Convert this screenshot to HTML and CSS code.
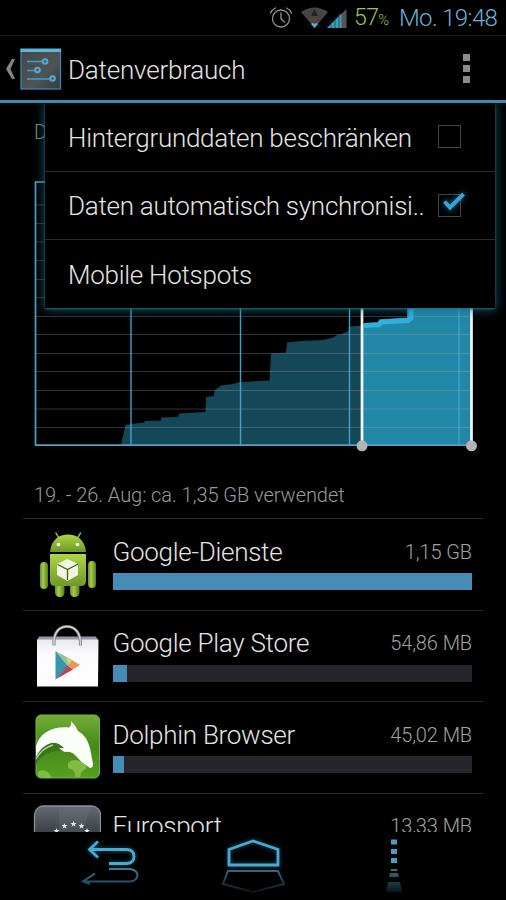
FILE: index.html
```html
<!DOCTYPE html>
<html lang="de">
<head>
<meta charset="utf-8">
<title>Datenverbrauch</title>
<link rel="stylesheet" href="styles.css">
</head>
<body>
<div class="phone">
  <header class="status">
    <svg class="status-icons" width="80" height="28" viewBox="268 4 80 28">
      <g fill="none" stroke="#929292" stroke-width="1.3">
        <circle cx="281" cy="18.500" r="8.500"/>
        <path d="M281 13v6l3.500 3M270.500 13q1.500-3.500 5-5M286.500 8q3.500 1.500 5 5" stroke-linecap="round"/>
      </g>
      <path d="M301 12Q314.500 3 328 12L314.500 28Z" fill="#454545"/>
      <path d="M314.500 9l3.500 7h-7Z" fill="#222"/>
      <path d="M311 18h7l-1.500 3h-4Z" fill="#76343b"/>
      <path d="M311 24q1.500-2 3.500 0 2-2 3.500 0l-3.500 4Z" fill="#3bbbe0"/>
      <path d="M327 28L346.500 9V28Z" fill="#555"/>
      <path d="M327 28L341.500 13.500V28Z" fill="#3c9dbd"/>
      <path d="M331 20v8M335 17v11M339 13v15" stroke="#164454" stroke-width=".8"/>
    </svg>
    <span class="battery">57<small>%</small></span>
    <span class="clock">Mo. 19:48</span>
  </header>

  <div class="actionbar">
    <svg class="up" width="11" height="22" viewBox="0 0 11 22"><path d="M7 1h3L5.500 11 10 21H7L1 11Z" fill="#858585"/></svg>
    <svg class="app-icon" width="42" height="42" viewBox="0 0 42 42">
      <defs><linearGradient id="tile" x1="0" y1="0" x2="1" y2="1"><stop stop-color="#414749"/><stop offset=".6" stop-color="#505354"/><stop offset="1" stop-color="#323b40"/></linearGradient></defs>
      <rect x="1" y="1" width="39.500" height="40" fill="url(#tile)" stroke="#3787b0" stroke-width="1.300"/>
      <path d="M.5 1h40.500v3H.5Z" fill="#62b5d5"/>
      <path d="M7 13.500h27M7 22.500h27M7 31h27" stroke="#28607f" stroke-width="1"/>
      <path d="M7 13.500h17M7 22.500h10M7 31h25" stroke="#4a9cc5" stroke-width="1.700"/>
      <g fill="#315f79" stroke="#58a9d0" stroke-width="2"><circle cx="25" cy="13.500" r="2.300"/><circle cx="17.500" cy="22" r="2.300"/><circle cx="32.500" cy="30.500" r="2.300"/></g>
    </svg>
    <h1 class="title">Datenverbrauch</h1>
    <div class="overflow"><i></i><i></i><i></i></div>
  </div>

  <main class="content">
    <div class="cycle">D</div>
    <svg class="chart" width="460" height="280" viewBox="25 175 460 280">
      <path d="M121 445L125.500 425 131 424 144 422.500 145 421 161 420.500V417.500L178 417 179 413.500 205.500 412 206 397 213.500 396 215 390 221 385.500 233 384 240 382 269.500 380.500 271 353.500 286 352.500 287 342.500 301 341 323 340 333 337.500 337 335 342 334 348 331 350 326.500 362 325.500V445Z" fill="#144858"/>
      <path d="M362 324L379 323V319.500L407 317.500V290L471 285V445H362Z" fill="#2387a8"/>
      <path d="M36 427.500H470M36 409H470M36 390.500H470M36 371.500H470M36 353.500H470M36 334.500H470M36 316.500H470M36 297.500H470M36 279.500H470M36 260.500H470M36 242H470M36 223.500H470M36 205H470" stroke="#a9a9a9" stroke-opacity=".3"/>
      <path d="M364 325.500L379 324.500 381 322 408 320.500 411 318V308L430 303" fill="none" stroke="#31b1df" stroke-width="5"/>
      <path d="M131 182V445M240.500 182V445M349.500 182V445M459 182V445" stroke="#41a3c8" stroke-width="1.400"/>
      <path d="M472 182H35.500V445.200H472" fill="none" stroke="#49a5c6" stroke-width="1.700"/>
      <path d="M362 182V443M471.500 182V443" stroke="#f5f7f7" stroke-width="2.700"/>
      <circle cx="362" cy="445.800" r="5.500" fill="#b4b4b6"/><circle cx="471.500" cy="445.800" r="5.500" fill="#b4b4b6"/>
    </svg>
    <p class="summary">19. - 26. Aug: ca. 1,35 GB verwendet</p>

    <ul class="apps">
      <li class="app">
        <svg class="icon" width="68" height="70" viewBox="33 529 68 70">
          <defs>
            <linearGradient id="green" x1="0" y1="0" x2="0" y2="1"><stop stop-color="#add645"/><stop offset="1" stop-color="#6f9927"/></linearGradient>
            <linearGradient id="limb" x1="0" y1="0" x2="1" y2="0"><stop stop-color="#6b9128"/><stop offset=".4" stop-color="#a7cb4e"/><stop offset="1" stop-color="#577a1d"/></linearGradient>
          </defs>
          <path d="M56 533l3.500 6M80.500 533l-3.500 6" stroke="#8dae48" stroke-width="1.500" stroke-linecap="round"/>
          <rect x="55" y="578" width="9.500" height="19" rx="4.500" fill="url(#limb)"/><rect x="70" y="578" width="9.500" height="19" rx="4.500" fill="url(#limb)"/>
          <rect x="40" y="562" width="8" height="27" rx="4" fill="url(#limb)"/><rect x="88" y="561" width="8" height="27" rx="4" fill="url(#limb)"/>
          <path d="M50 552C51 540 59 534.500 68 534.500S85 540 86 552Z" fill="url(#green)"/>
          <path d="M50 554H86V581q0 5-5 5H55q-5 0-5-5Z" fill="url(#green)"/>
          <circle cx="58.500" cy="544.500" r="1.800" fill="#f4f8df"/><circle cx="77.500" cy="544.500" r="1.800" fill="#f4f8df"/>
          <path d="M67.500 559L78 564V575L67.500 581 57 575V564Z" fill="#f1f6e3"/>
          <path d="M57.500 564.500L67.500 569.500 78 564M67.500 569.500V580" fill="none" stroke="#4a5f1c" stroke-width="1.300"/>
        </svg>
        <div class="body"><div class="line"><span class="name">Google-Dienste</span><span class="size">1,15 GB</span></div>
        <div class="bar"><div class="fill" style="width:100%"></div></div></div>
      </li>
      <li class="app">
        <svg class="icon" width="68" height="70" viewBox="33 620.500 68 70">
          <defs><linearGradient id="bag" x1="0" y1="0" x2="0" y2="1"><stop stop-color="#e9e8ee"/><stop offset=".3" stop-color="#fbfafd"/><stop offset="1" stop-color="#fff"/></linearGradient></defs>
          <path d="M39 636H96L98 640H37Z" fill="#96969e"/>
          <path d="M37 639H98.500L98 686H37Z" fill="url(#bag)"/>
          <path d="M54 645C53 631 60 626 67 626S81 631 80.500 645" fill="none" stroke="#78787f" stroke-width="3"/>
          <path d="M54 645C53 631 60 626 67 626S81 631 80.500 645" fill="none" stroke="#d5d5dc" stroke-width="1.500"/>
          <path d="M55.500 650.500V679L68 665Z" fill="#3696ad"/><path d="M55.500 650.500L73 660 67.500 665.500Z" fill="#96bf9c"/>
          <path d="M66 656.500L73 660 68.500 665Z" fill="#cad96d"/><path d="M55.500 679L67.500 665 73 669Z" fill="#b64562"/><path d="M67.500 665L72.500 660 80 664.500 72.500 669Z" fill="#ed9558"/>
        </svg>
        <div class="body"><div class="line"><span class="name">Google Play Store</span><span class="size">54,86 MB</span></div>
        <div class="bar"><div class="fill" style="width:4.1%"></div></div></div>
      </li>
      <li class="app">
        <svg class="icon" width="68" height="70" viewBox="33 712 68 70">
          <defs><linearGradient id="dolphin" x1="0" y1="0" x2="0" y2="1"><stop stop-color="#73ad38"/><stop offset=".5" stop-color="#458819"/><stop offset="1" stop-color="#56a21e"/></linearGradient></defs>
          <rect x="36" y="715" width="63.500" height="63" rx="5" fill="url(#dolphin)" stroke="#79ae4c"/>
          <path d="M68 763q5-5 12-2 8 2 6 8-5 2-6 8h-5q1-7-7-9ZM38 772q5-4 11 1l3 5H41q-4-1-3-6Z" fill="#81bb45"/>
          <path d="M36 756C43 744 52 741 61 744L66 752Q50 747 38 761L36 765Z" fill="#3b741f"/>
          <path d="M36 746C40 733 52 726 69 727.500Q72 725 71 721 76 726 78 731 87 736 90 748L93 764Q93 768 90 768L86 765Q81 762 76 756 71 751 66 752 63 752 59 748L64 748Q58 742 51 743 41 746 36 757Z" fill="#fbfdf8"/>
          <path d="M36 759Q42 748 53 745" fill="none" stroke="#b7d49b" stroke-width="1.300"/>
        </svg>
        <div class="body"><div class="line"><span class="name">Dolphin Browser</span><span class="size">45,02 MB</span></div>
        <div class="bar"><div class="fill" style="width:3.200%"></div></div></div>
      </li>
      <li class="app">
        <svg class="icon" width="68" height="70" viewBox="33 803.500 68 70">
          <defs><linearGradient id="slate" x1="0" y1="0" x2="0" y2="1"><stop stop-color="#656a70"/><stop offset=".5" stop-color="#30363d"/></linearGradient><path id="star" d="M0-3l.8 2.100H3L1.200.4 2 2.700 0 1.300-2 2.700-1.200.4-3-.9H-.8Z"/></defs>
          <rect x="34.500" y="805.500" width="66" height="66" rx="9" fill="url(#slate)" stroke="#899096" stroke-width="1.300"/>
          <path d="M59 806H91L76 850H59Z" fill="#798089" opacity=".22"/>
          <g fill="#e7eaed"><use href="#star" x="73.500" y="823.500"/><use href="#star" x="64.500" y="825.500"/><use href="#star" x="81.500" y="825.500"/><use href="#star" x="56.500" y="830.500"/><use href="#star" x="87" y="830.500"/></g>
        </svg>
        <div class="body"><div class="line"><span class="name">Eurosport</span><span class="size">13,33 MB</span></div>
        <div class="bar"><div class="fill" style="width:1%"></div></div></div>
      </li>
    </ul>

    <div class="menu-clip"><div class="menu">
      <div class="item"><span class="label">Hintergrunddaten beschränken</span><span class="box"></span></div>
      <div class="item"><span class="label">Daten automatisch synchronisi..</span><span class="box"><svg class="tick" width="26" height="24" viewBox="0 0 26 24"><path d="M4.500 11.500L10 17.500 23.500 4" fill="none" stroke="#32a4d8" stroke-width="4"/></svg></span></div>
      <div class="item"><span class="label">Mobile Hotspots</span></div>
    </div></div>
  </main>

  <nav class="nav">
    <svg width="506" height="68" viewBox="0 832 506 68">
      <defs>
        <linearGradient id="fade" gradientUnits="userSpaceOnUse" x1="0" y1="868" x2="0" y2="893"><stop stop-color="#3d7f97"/><stop offset="1" stop-color="#102e3a"/></linearGradient>
        <linearGradient id="fade-out" gradientUnits="userSpaceOnUse" x1="0" y1="869" x2="0" y2="893"><stop stop-color="#346f85"/><stop offset="1" stop-color="#071116"/></linearGradient>
      </defs>
      <g class="glow" fill="none" stroke="#45abd3" stroke-width="2.800">
        <path d="M98 841.500L89.500 849.500 98 857.500M90 849.500H127Q134 850 134 856.500T127 863.500H109"/>
        <path d="M229 865V849.500L253 841 278 849.500V865Z"/>
      </g>
      <path d="M109 869H130Q137 870 137.500 875 137 881 130 881.500H83M95 873.500L83 881.500 90 884" fill="none" stroke="url(#fade)" stroke-width="2"/>
      <path d="M228 871H278L284 884 253 892 223 884Z" fill="none" stroke="url(#fade-out)" stroke-width="2"/>
      <g fill="#489fc1"><path d="M391 839.500h6v5h-6zM391 849h6v5h-6zM391 858h6v5h-6z"/></g>
      <path d="M391 869h6l.5 2h-7ZM390 873h8l1 4h-10ZM388 882h12l2 10h-16Z" fill="url(#fade-out)"/>
    </svg>
  </nav>
</div>
</body>
</html>
```
FILE: styles.css
```css
* { box-sizing: border-box; }
body { margin: 0; background: #000; color: #e4e4e4; font-family: Roboto, "Liberation Sans", sans-serif; font-weight: 300; }
.phone { width: 506px; height: 900px; display: flex; flex-direction: column; overflow: hidden; background: #000; }

.status { height: 36px; flex: none; display: flex; align-items: center; justify-content: flex-end; padding-right: 9px; border-bottom: 1px solid #191919; white-space: nowrap; }
.battery { width: 45px; margin-left: 6px; font-size: 23px; color: #a0c64b; letter-spacing: -.6px; }
.battery small { font-size: 14.500px; }
.clock { width: 98px; font-size: 24px; color: #68afd2; letter-spacing: -.65px; }

.actionbar { height: 67px; flex: none; display: flex; align-items: center; padding: 1px 36px 0 5px; border-bottom: 3px solid #3b8cad; }
.app-icon { margin-left: 4px; }
.title { margin: 2px 0 0 6px; font-size: 26px; font-weight: 300; letter-spacing: -.2px; white-space: nowrap; }
.overflow { margin-left: auto; display: grid; gap: 4px; }
.overflow i { width: 7px; height: 7px; background: #8c8c8c; }

.content { flex: 1; min-height: 0; position: relative; overflow: hidden; }
.cycle { width: 45px; height: 72px; padding: 17px 0 0 34px; overflow: hidden; font-size: 20px; line-height: 24px; color: #858585; }
.chart { display: block; margin-left: 25px; }
.summary { margin: 0; height: 63px; padding: 28px 0 0 34px; font-size: 20px; line-height: 24px; letter-spacing: -.05px; color: #9a9a9a; white-space: nowrap; }

.apps { list-style: none; margin: 0 23px; padding: 0; }
.app { height: 91.500px; display: flex; border-top: 1.500px solid #292929; padding: 10px 11px 0 10px; }
.icon { flex: none; }
.body { flex: 1; padding: 7px 0 0 11.500px; }
.line { display: flex; justify-content: space-between; align-items: center; height: 31px; white-space: nowrap; }
.name { font-size: 26px; letter-spacing: -.28px; }
.size { font-size: 20px; color: #a2a2a2; letter-spacing: -.1px; }
.bar { height: 17px; margin-top: 6px; background: #25252b; }
.fill { height: 100%; background: #458db7; }

.menu-clip { position: absolute; left: 30px; top: 0; width: 476px; height: 222px; padding-left: 15px; overflow: hidden; }
.menu { width: 450px; height: 205px; background: #000; box-shadow: 0 1px 10px 1px #1a6a80b0, 0 1px 2px #1c6a7e; }
.item { height: 68.500px; display: flex; align-items: center; padding: 0 34px 0 23px; border-bottom: 1.500px solid #2c2c2c; }
.item:last-child { border: 0; }
.label { padding-top: 2px; font-size: 26px; letter-spacing: -.27px; white-space: nowrap; }
.box { flex: none; margin-left: auto; width: 23px; height: 23px; border: 1.500px solid #454545; position: relative; }
.tick { position: absolute; left: 1px; top: -5px; filter: drop-shadow(0 0 3px #126b98); }

.nav { height: 68px; flex: none; background: #000; }
.nav svg { display: block; }
.glow { filter: drop-shadow(0 0 2px #13556f); }
```
